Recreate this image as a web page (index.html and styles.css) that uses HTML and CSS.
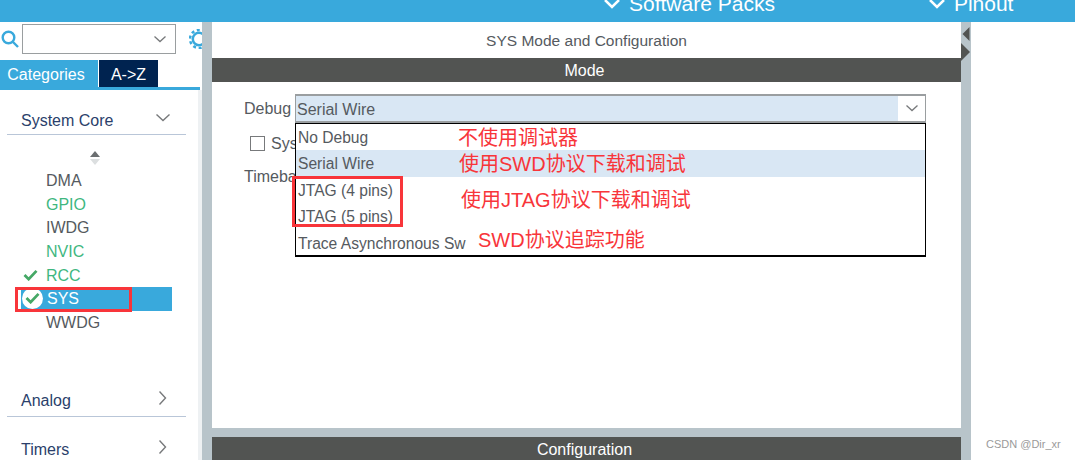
FILE: index.html
```html
<!DOCTYPE html>
<html lang="zh-CN">
<head>
  <meta charset="UTF-8">
  <meta name="viewport" content="width=device-width, initial-scale=1.0">
  <title>SYS Mode and Configuration</title>
  <link rel="stylesheet" href="styles.css">
</head>
<body>
  <header class="topbar">
    <div class="toptab toptab-packs">
      <svg class="toptab-icon" viewBox="0 0 16 10"><path d="M1 1l7 7 7-7" /></svg>
      <span>Software Packs</span>
    </div>
    <div class="toptab toptab-pinout">
      <svg class="toptab-icon" viewBox="0 0 16 10"><path d="M1 1l7 7 7-7" /></svg>
      <span>Pinout</span>
    </div>
  </header>

  <div class="app">
    <aside class="sidebar">
      <div class="search">
        <svg class="search-icon" viewBox="0 0 18 18"><circle cx="7.5" cy="7.5" r="5.8" /><path d="M12 12l5 5" /></svg>
        <div class="search-box">
          <svg class="chev-small" viewBox="0 0 12 7"><path d="M.5 .5l5.5 5 5.500-5" /></svg>
        </div>
        <svg class="gear" viewBox="0 0 20 20">
          <circle cx="10" cy="10" r="6.200" />
          <circle cx="10" cy="10" r="9" class="gear-teeth" />
        </svg>
      </div>
      <div class="tabs">
        <div class="tab tab-on">Categories</div>
        <div class="tab tab-off">A-&gt;Z</div>
      </div>
      <div class="tree">
        <div class="group group-first">
          <span>System Core</span>
          <svg class="chev" viewBox="0 0 14 8"><path d="M.5 .5l6.500 6 6.500-6" /></svg>
        </div>
        <div class="sort">
          <svg viewBox="0 0 12 14">
            <path d="M6 0l5 6H1z" fill="#6a6e70" />
            <path d="M1 8h10l-5 6z" fill="#dcdfe0" />
          </svg>
        </div>
        <ul class="items">
          <li class="item">DMA</li>
          <li class="item item-green">GPIO</li>
          <li class="item">IWDG</li>
          <li class="item item-green">NVIC</li>
          <li class="item item-green">
            <svg class="check" viewBox="0 0 16 13"><path d="M1.500 6.500l4.500 4.500 8.500-9" /></svg>
            RCC
          </li>
          <li class="item item-active">
            <span class="check-round">
              <svg class="check" viewBox="0 0 16 13"><path d="M1.500 6.500l4.500 4.500 8.500-9" /></svg>
            </span>
            SYS
          </li>
          <li class="item">WWDG</li>
        </ul>
        <div class="group group-analog">
          <span>Analog</span>
          <svg class="chev-right" viewBox="0 0 8 14"><path d="M.5 .5l6 6.500-6 6.500" /></svg>
        </div>
        <div class="group group-timers">
          <span>Timers</span>
          <svg class="chev-right" viewBox="0 0 8 14"><path d="M.5 .5l6 6.500-6 6.500" /></svg>
        </div>
      </div>
    </aside>

    <main class="workspace">
      <section class="panel">
        <h1 class="panel-title">SYS Mode and Configuration</h1>
        <div class="bar">Mode</div>
        <div class="form">
          <div class="row row-debug">
            <label class="label label-debug">Debug</label>
            <div class="select">
              <div class="select-value">Serial Wire</div>
              <div class="select-arrow">
                <svg class="chev-small" viewBox="0 0 12 7"><path d="M.5 .5l5.500 5 5.500-5" /></svg>
              </div>
              <ul class="dropdown">
                <li>No Debug</li>
                <li class="dropdown-on">Serial Wire</li>
                <li>JTAG (4 pins)</li>
                <li>JTAG (5 pins)</li>
                <li>Trace Asynchronous Sw</li>
              </ul>
            </div>
          </div>
          <div class="row row-check">
            <span class="checkbox"></span>
            <span class="label">Sys</span>
          </div>
          <div class="row row-time">
            <span class="label">Timeba</span>
          </div>
        </div>
      </section>
      <div class="bar bar-config">Configuration</div>
      <div class="arrows">
        <svg viewBox="0 0 10 16" class="arrow-left"><path d="M9 0v16L1 8z" /></svg>
        <svg viewBox="0 0 10 18" class="arrow-right"><path d="M0 0v18l9-9z" /></svg>
      </div>
    </main>
    <div class="outline"></div>
  </div>

  <!-- notas em vermelho por cima do print -->
  <div class="mark mark-sys"></div>
  <div class="mark mark-jtag"></div>
  <div class="note note-1">不使用调试器</div>
  <div class="note note-2">使用SWD协议下载和调试</div>
  <div class="note note-3">使用JTAG协议下载和调试</div>
  <div class="note note-4">SWD协议追踪功能</div>
  <div class="watermark">CSDN @Dir_xr</div>
</body>
</html>
```

FILE: styles.css
```css
:root {
  --blue: #39a9dc;
  --navy: #002350;
  --dark: #525452;
  --gray: #b8c4ca;
  --text: #555a60;
  --green: #3fb77f;
  --red: #f8353a;
  --light: #d9e7f4;
}
* { box-sizing: border-box; margin: 0; padding: 0; }
html, body { height: 100%; }
body {
  position: relative;
  overflow: hidden;
  font-family: "Liberation Sans", Arial, sans-serif;
  color: var(--text);
  background: #fff;
}
ul { list-style: none; }
svg { display: block; fill: none; }

.topbar {
  height: 22px;
  background: var(--blue);
  color: #fff;
  display: flex;
  overflow: hidden;
  font-size: 21px;
  line-height: 22px;
}
.toptab {
  display: flex;
  gap: 9px;
  margin-top: -7px;
}
.toptab-packs { margin-left: 604px; }
.toptab-pinout { margin-left: 154px; }
.toptab-icon {
  width: 16px;
  height: 10px;
  margin-top: 6px;
  stroke: #fff;
  stroke-width: 2.500;
}

.app { display: flex; height: 438px; }

/* barra lateral */
.sidebar { width: 202px; flex: none; overflow: hidden; }
.search {
  height: 38px;
  display: flex;
  align-items: flex-start;
  padding: 2px 0 0 1px;
}
.search-icon {
  width: 18px;
  height: 18px;
  margin-top: 6px;
  flex: none;
  stroke: var(--blue);
  stroke-width: 2.400;
}
.search-box {
  width: 154px;
  height: 30px;
  flex: none;
  margin-left: 3px;
  border: 1.500px solid #9a9ea0;
  display: flex;
  align-items: center;
  justify-content: flex-end;
  padding-right: 9px;
}
.chev-small {
  width: 12px;
  height: 7px;
  stroke: #77797b;
  stroke-width: 1.300;
}
.gear {
  width: 20px;
  height: 20px;
  margin: 5px 0 0 13px;
  flex: none;
  stroke: var(--blue);
  stroke-width: 2.500;
}
.gear-teeth { stroke-width: 2.500; stroke-dasharray: 3 2.700; }
.tabs {
  height: 30px;
  width: 200px;
  display: flex;
  align-items: flex-start;
  border-bottom: 3px solid var(--blue);
  color: #fff;
  font-size: 16px;
}
.tab { height: 27px; line-height: 29px; text-align: center; }
.tab-on { width: 98px; padding-right: 6px; background: var(--blue); }
.tab-off { width: 59px; margin-left: 1px; background: var(--navy); }

.tree {
  height: 370px;
  width: 202px;
  border-right: 4px solid #eef1f3;
  overflow: hidden;
}
.group {
  height: 30px;
  margin: 0 12px 0 7px;
  padding: 0 5px 0 14px;
  display: flex;
  align-items: center;
  justify-content: space-between;
  border-bottom: 1.500px solid #b9c6d8;
  color: #2b3f6b;
  font-size: 16px;
}
.group-first { margin-top: 15px; padding-top: 2px; }
.group-analog { margin-top: 52px; }
.group-timers { margin-top: 19px; }
.chev { width: 14px; height: 8px; stroke: #77797b; stroke-width: 1.400; margin: -6px 11px 0 0; }
.chev-right { width: 8px; height: 14px; stroke: #77797b; stroke-width: 1.400; margin: -6px 14px 0 0; }
.sort { height: 34px; padding: 16px 0 0 89px; }
.sort svg { width: 12px; height: 14px; }

.items { font-size: 16px; }
.item {
  height: 23.700px;
  line-height: 24px;
  padding-left: 46px;
  position: relative;
}
.item-green { color: var(--green); }
.item-active {
  width: 151px;
  margin-left: 21px;
  padding-left: 26px;
  background: var(--blue);
  color: #fff;
}
.check {
  position: absolute;
  left: 23px;
  top: 5px;
  width: 15px;
  height: 12px;
  stroke: #45a866;
  stroke-width: 3;
}
.check-round {
  position: absolute;
  left: 1px;
  top: 1px;
  width: 21px;
  height: 21px;
  border-radius: 50%;
  background: #fff;
}
.check-round .check { left: 3px; top: 4px; }

/* area central */
.workspace {
  position: relative;
  width: 769px;
  flex: none;
  background: var(--gray);
  padding: 0 10px;
}
.panel { height: 406px; background: #fff; }
.panel-title {
  height: 36px;
  line-height: 37px;
  text-align: center;
  font-size: 15.500px;
  font-weight: normal;
}
.bar {
  height: 24px;
  line-height: 25px;
  background: var(--dark);
  color: #fff;
  text-align: center;
  font-size: 16px;
  padding-right: 4px;
}
.bar-config { margin-top: 9px; height: 23px; }
.form { padding: 12px 0 0 32px; font-size: 16px; }
.row { display: flex; align-items: center; }
.row-debug { height: 29px; }
.row-check { height: 29px; margin-top: 6px; padding-left: 6px; gap: 6px; }
.row-time { height: 29px; margin-top: 4px; }
.label-debug { width: 51px; flex: none; }
.checkbox {
  width: 15px;
  height: 15px;
  border: 1.500px solid #77797b;
}
.select {
  position: relative;
  width: 631px;
  height: 29px;
  flex: none;
  display: flex;
  border: 1.500px solid #9a9ea0;
  border-width: 2px 1px;
}
.select-value {
  flex: 1;
  background: var(--light);
  padding-left: 1px;
  line-height: 27px;
}
.select-arrow {
  width: 27px;
  display: flex;
  align-items: center;
  justify-content: center;
}
.dropdown {
  position: absolute;
  left: -1px;
  top: 27px;
  width: 631px;
  height: 134px;
  z-index: 2;
  background: #fff;
  border: 1px solid #000;
  border-bottom-width: 2px;
  font-size: 15.600px;
}
.dropdown li {
  height: 26.500px;
  line-height: 28px;
  padding-left: 2px;
}
.dropdown li:first-child { height: 26px; }
.dropdown .dropdown-on { background: var(--light); }

.arrows {
  position: absolute;
  left: 759px;
  top: 5px;
  width: 10px;
}
.arrows svg { fill: var(--dark); }
.arrow-left { width: 10px; height: 14px; }
.arrow-right { width: 10px; height: 18px; margin-top: 2px; }
.outline { flex: 1; background: #fff; }

/* marcacoes */
.mark { position: absolute; border: 3px solid var(--red); z-index: 3; }
.mark-sys { left: 15px; top: 287px; width: 117px; height: 25px; }
.mark-jtag { left: 292px; top: 176px; width: 111px; height: 51px; }
.note {
  position: absolute;
  z-index: 3;
  color: var(--red);
  font-family: "Liberation Sans", "Noto Sans CJK SC", sans-serif;
  font-size: 20px;
  line-height: 24px;
  white-space: nowrap;
}
.note-1 { left: 458px; top: 126px; }
.note-2 { left: 459px; top: 152px; }
.note-3 { left: 461px; top: 188px; }
.note-4 { left: 478px; top: 228px; }
.watermark {
  position: absolute;
  left: 986px;
  top: 438px;
  font-size: 11px;
  color: #9a9a9a;
}
```
